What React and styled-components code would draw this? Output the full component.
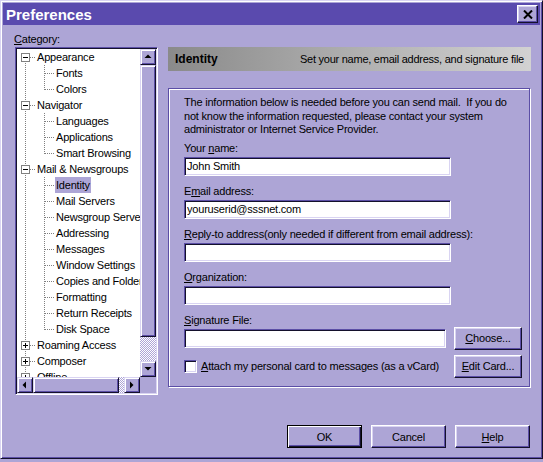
import React from 'react';
import styled, { createGlobalStyle, css } from 'styled-components';

const FACE = '#ada5d6';
const LIGHT = '#d9d4f2';
const SHADOW = '#5b4ea6';
const DARK = '#14112c';
const TITLE = '#5a4aae';
const DOT = '#808080';
const FONT = '"Liberation Sans", Arial, sans-serif';

const Global = createGlobalStyle`
  html, body { margin: 0; padding: 0; background: ${FACE}; }
  body { font-family: ${FONT}; font-size: 11px; color: #000; letter-spacing: -0.2px; }
  * { box-sizing: border-box; }
`;

const Window = styled.div`
  width: 543px;
  height: 459px;
  background: ${FACE};
  border: 1px solid;
  border-color: ${LIGHT} ${DARK} ${DARK} ${LIGHT};
  box-shadow: inset 1px 1px #fff, inset -1px -1px ${SHADOW};
  padding: 2px;
  display: flex;
  flex-direction: column;
`;

const TitleBar = styled.div`
  height: 22px;
  background: ${TITLE};
  display: flex;
  align-items: center;
  justify-content: space-between;
  padding: 0 2px 0 3px;
`;

const Title = styled.span`
  color: #fff;
  font-weight: bold;
  font-size: 15px;
  letter-spacing: 0;
`;

const CloseButton = styled.div`
  width: 21px;
  height: 18px;
  background: ${FACE};
  border: 1px solid;
  border-color: #fff ${DARK} ${DARK} #fff;
  box-shadow: inset -1px -1px ${SHADOW}, inset 1px 1px ${LIGHT};
  display: flex;
  align-items: center;
  justify-content: center;
`;

const Body = styled.div`
  display: grid;
  grid-template-columns: 143px 363px;
  column-gap: 10px;
  padding-left: 12px;
`;

const LeftCol = styled.div`
  display: flex;
  flex-direction: column;
`;

const CategoryLabel = styled.div`
  margin-top: 8px;
  line-height: 13px;
  margin-bottom: 1px;
  margin-left: -1px;
`;

const TreeBox = styled.div`
  height: 348px;
  border: 1px solid;
  border-color: ${SHADOW} #fff #fff ${SHADOW};
  box-shadow: inset 1px 1px ${DARK}, inset -1px -1px ${LIGHT};
  padding: 1px;
  display: grid;
  grid-template-columns: 1fr 16px;
  grid-template-rows: 1fr 16px;
`;

const TreeList = styled.div`
  position: relative;
  background: #fff;
  overflow: hidden;
  &::before {
    content: '';
    position: absolute;
    left: 8px;
    top: 8px;
    bottom: 0;
    width: 1px;
    background: linear-gradient(${DOT} 50%, transparent 50%) 0 0 / 1px 2px;
  }
`;

const TreeRow = styled.div`
  position: relative;
  height: 16px;
  line-height: 16px;
  white-space: nowrap;
  padding-left: ${(p) => (p.$level ? 38 : 19)}px;
  &::after {
    content: '';
    position: absolute;
    top: 8px;
    height: 1px;
    background: linear-gradient(to right, ${DOT} 50%, transparent 50%) 0 0 / 2px 1px;
    left: ${(p) => (p.$level ? 28 : 13)}px;
    width: ${(p) => (p.$level ? 9 : 5)}px;
  }
  ${(p) =>
    p.$level &&
    css`
      &::before {
        content: '';
        position: absolute;
        left: 27px;
        top: 0;
        width: 1px;
        height: ${p.$last ? 9 : 16}px;
        background: linear-gradient(${DOT} 50%, transparent 50%) 0 0 / 1px 2px;
      }
    `}
`;

const RowLabel = styled.span`
  display: inline-block;
  padding: 0 1px;
  line-height: 16px;
  background: ${(p) => (p.$selected ? FACE : 'transparent')};
`;

const Expander = styled.span`
  position: absolute;
  left: 4px;
  top: 4px;
  width: 9px;
  height: 9px;
  border: 1px solid ${DOT};
  background: #fff;
  z-index: 1;
  &::before {
    content: '';
    position: absolute;
    left: 1px;
    top: 3px;
    width: 5px;
    height: 1px;
    background: #000;
  }
  ${(p) =>
    p.$plus &&
    css`
      &::after {
        content: '';
        position: absolute;
        left: 3px;
        top: 1px;
        width: 1px;
        height: 5px;
        background: #000;
      }
    `}
`;

const raised = css`
  background: ${FACE};
  border: 1px solid;
  border-color: ${LIGHT} ${DARK} ${DARK} ${LIGHT};
  box-shadow: inset 1px 1px #fff, inset -1px -1px ${SHADOW};
`;

const ScrollBar = styled.div`
  display: flex;
  flex-direction: ${(p) => (p.$horizontal ? 'row' : 'column')};
  background: repeating-conic-gradient(#fff 0 25%, ${FACE} 0 50%) 0 0 / 2px 2px;
`;

const ScrollButton = styled.div`
  ${raised};
  width: 16px;
  height: 16px;
  flex: none;
  display: flex;
  align-items: center;
  justify-content: center;
`;

const Thumb = styled.div`
  ${raised};
  flex: none;
  ${(p) => (p.$horizontal ? `width: ${p.$size}px;` : `height: ${p.$size}px;`)}
`;

const Track = styled.div`
  flex: 1;
`;

const Corner = styled.div`
  background: ${FACE};
`;

const RightCol = styled.div`
  display: flex;
  flex-direction: column;
`;

const PanelHeader = styled.div`
  margin-top: 22px;
  height: 24px;
  display: flex;
  align-items: center;
  justify-content: space-between;
  padding: 0 7px;
  background: linear-gradient(to right, #8a8a8a, #d2d2d2);
`;

const HeaderTitle = styled.span`
  font-weight: bold;
  font-size: 12px;
  letter-spacing: 0;
`;

const HeaderDesc = styled.span`
  font-size: 11px;
  letter-spacing: -0.25px;
`;

const Group = styled.div`
  margin-top: 17px;
  width: 362px;
  border: 1px solid ${SHADOW};
  box-shadow: inset 1px 1px #fff, 1px 1px #fff;
  padding: 7px 7px 8px 15px;
`;

const Intro = styled.p`
  margin: 0 0 5px;
  line-height: 13.5px;
  white-space: nowrap;
`;

const Field = styled.div`
  margin-bottom: 9px;
`;

const FieldLabel = styled.label`
  display: block;
  line-height: 13px;
  white-space: nowrap;
  margin-bottom: ${(p) => (p.$tight ? 0 : 2)}px;
`;

const TextInput = styled.input`
  display: block;
  width: ${(p) => (p.$fill ? '100%' : '267px')};
  height: 19px;
  padding: 0 2px;
  font-family: ${FONT};
  font-size: 11px;
  letter-spacing: -0.2px;
  color: #000;
  background: #fff;
  border: 1px solid;
  border-color: ${SHADOW} #fff #fff ${SHADOW};
  box-shadow: inset 1px 1px ${DARK}, inset -1px -1px ${LIGHT};
  outline: none;
`;

const SigGrid = styled.div`
  display: grid;
  grid-template-columns: 1fr 68px;
  column-gap: 8px;
  row-gap: 5px;
  align-items: center;
`;

const CheckRow = styled.label`
  display: flex;
  align-items: center;
  gap: 4px;
  white-space: nowrap;
`;

const CheckBox = styled.span`
  flex: none;
  width: 13px;
  height: 13px;
  background: #fff;
  border: 1px solid;
  border-color: ${SHADOW} #fff #fff ${SHADOW};
  box-shadow: inset 1px 1px ${DARK}, inset -1px -1px ${LIGHT};
`;

const Button = styled.button`
  width: ${(p) => p.$w}px;
  height: 23px;
  padding: 0;
  font-family: ${FONT};
  font-size: 11px;
  letter-spacing: -0.2px;
  color: #000;
  background: ${FACE};
  border: 1px solid;
  ${(p) =>
    p.$default
      ? css`
          border-color: #000;
          box-shadow: inset 1px 1px #fff, inset -1px -1px ${DARK}, inset -2px -2px ${SHADOW};
        `
      : css`
          border-color: #fff ${DARK} ${DARK} #fff;
          box-shadow: inset -1px -1px ${SHADOW}, inset 1px 1px ${LIGHT};
        `}
`;

const Footer = styled.div`
  display: flex;
  justify-content: flex-end;
  gap: 9px;
  margin-top: 30px;
  padding-right: 10px;
`;

const Arrow = ({ dir }) => {
  const pts = {
    up: '0.5,5 7.5,5 4,1.5',
    down: '0.5,2 7.5,2 4,5.5',
    left: '5,0.5 5,7.5 1.5,4',
    right: '2,0.5 2,7.5 5.5,4',
  }[dir];
  return (
    <svg width="8" height="8" viewBox="0 0 8 8">
      <polygon points={pts} fill="#000" />
    </svg>
  );
};

const tree = [
  { label: 'Appearance', level: 0, exp: 'minus' },
  { label: 'Fonts', level: 1 },
  { label: 'Colors', level: 1, last: true },
  { label: 'Navigator', level: 0, exp: 'minus' },
  { label: 'Languages', level: 1 },
  { label: 'Applications', level: 1 },
  { label: 'Smart Browsing', level: 1, last: true },
  { label: 'Mail & Newsgroups', level: 0, exp: 'minus' },
  { label: 'Identity', level: 1, selected: true },
  { label: 'Mail Servers', level: 1 },
  { label: 'Newsgroup Servers', level: 1 },
  { label: 'Addressing', level: 1 },
  { label: 'Messages', level: 1 },
  { label: 'Window Settings', level: 1 },
  { label: 'Copies and Folders', level: 1 },
  { label: 'Formatting', level: 1 },
  { label: 'Return Receipts', level: 1 },
  { label: 'Disk Space', level: 1, last: true },
  { label: 'Roaming Access', level: 0, exp: 'plus' },
  { label: 'Composer', level: 0, exp: 'plus' },
  { label: 'Offline', level: 0, exp: 'plus' },
  { label: 'Advanced', level: 0, exp: 'plus' },
];

export default function App() {
  return (
    <>
      <Global />
      <Window>
        <TitleBar>
          <Title>Preferences</Title>
          <CloseButton>
            <svg width="10" height="9" viewBox="0 0 10 9">
              <path d="M1 0.5 L9 8.5 M9 0.5 L1 8.5" stroke="#000" strokeWidth="2" />
            </svg>
          </CloseButton>
        </TitleBar>
        <Body>
          <LeftCol>
            <CategoryLabel>
              <u>C</u>ategory:
            </CategoryLabel>
            <TreeBox>
              <TreeList>
                {tree.map((r) => (
                  <TreeRow key={r.label} $level={r.level} $last={r.last}>
                    {r.exp && <Expander $plus={r.exp === 'plus'} />}
                    <RowLabel $selected={r.selected}>{r.label}</RowLabel>
                  </TreeRow>
                ))}
              </TreeList>
              <ScrollBar>
                <ScrollButton>
                  <Arrow dir="up" />
                </ScrollButton>
                <Thumb $size={272} />
                <Track />
                <ScrollButton>
                  <Arrow dir="down" />
                </ScrollButton>
              </ScrollBar>
              <ScrollBar $horizontal>
                <ScrollButton>
                  <Arrow dir="left" />
                </ScrollButton>
                <Thumb $horizontal $size={86} />
                <Track />
                <ScrollButton>
                  <Arrow dir="right" />
                </ScrollButton>
              </ScrollBar>
              <Corner />
            </TreeBox>
          </LeftCol>
          <RightCol>
            <PanelHeader>
              <HeaderTitle>Identity</HeaderTitle>
              <HeaderDesc>Set your name, email address, and signature file</HeaderDesc>
            </PanelHeader>
            <Group>
              <Intro>
                The information below is needed before you can send mail.&nbsp; If you do
                <br />
                not know the information requested, please contact your system
                <br />
                administrator or Internet Service Provider.
              </Intro>
              <Field>
                <FieldLabel>
                  Your <u>n</u>ame:
                </FieldLabel>
                <TextInput readOnly value="John Smith" />
              </Field>
              <Field>
                <FieldLabel>
                  E<u>m</u>ail address:
                </FieldLabel>
                <TextInput readOnly value="youruserid@sssnet.com" />
              </Field>
              <Field>
                <FieldLabel>
                  <u>R</u>eply-to address(only needed if different from email address):
                </FieldLabel>
                <TextInput readOnly value="" />
              </Field>
              <Field>
                <FieldLabel>
                  <u>O</u>rganization:
                </FieldLabel>
                <TextInput readOnly value="" />
              </Field>
              <FieldLabel $tight>
                <u>S</u>ignature File:
              </FieldLabel>
              <SigGrid>
                <TextInput $fill readOnly value="" />
                <Button $w={68}>
                  <u>C</u>hoose...
                </Button>
                <CheckRow>
                  <CheckBox />
                  <span>
                    <u>A</u>ttach my personal card to messages (as a vCard)
                  </span>
                </CheckRow>
                <Button $w={68}>
                  <u>E</u>dit Card...
                </Button>
              </SigGrid>
            </Group>
          </RightCol>
        </Body>
        <Footer>
          <Button $w={75} $default>
            OK
          </Button>
          <Button $w={75}>Cancel</Button>
          <Button $w={75}>
            <u>H</u>elp
          </Button>
        </Footer>
      </Window>
    </>
  );
}
